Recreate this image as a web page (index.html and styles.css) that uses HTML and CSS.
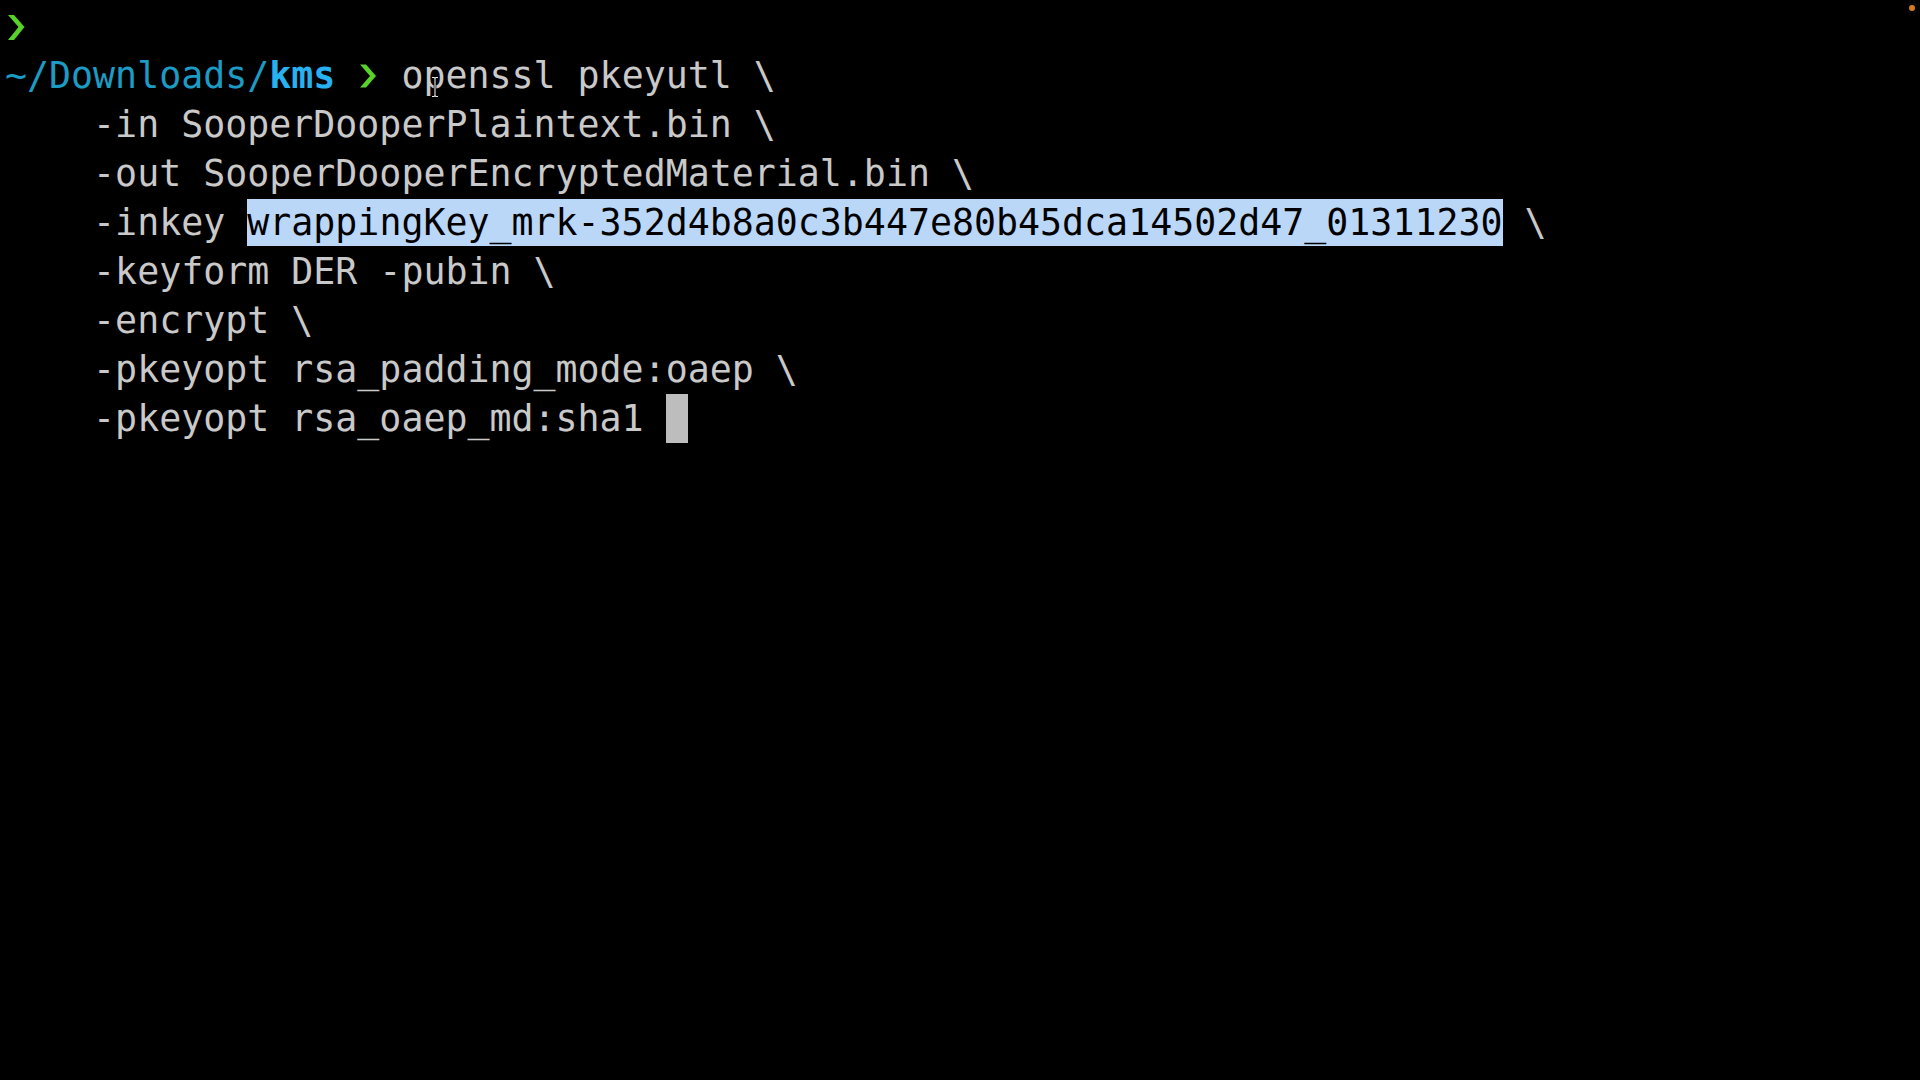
FILE: index.html
```html
<!DOCTYPE html>
<html lang="en">
<head>
<meta charset="utf-8">
<title>Terminal</title>
<link rel="stylesheet" href="styles.css">
</head>
<body>
<div class="screen">
  <div class="term">
<div class="line"><svg class="chev" viewBox="0 0 22 49"><polygon points="3,13 9,13 19.5,25 9,38 3,38 13.5,25"/></svg></div>
<div class="line"><span class="path">~/Downloads/</span><span class="dir">kms</span> <svg class="chev" viewBox="0 0 22 49"><polygon points="3,13.5 9,13.5 19,25 9,36.5 3,36.5 13,25"/></svg> openssl pkeyutl \</div>
<div class="line">    -in SooperDooperPlaintext.bin \</div>
<div class="line">    -out SooperDooperEncryptedMaterial.bin \</div>
<div class="line">    -inkey <span class="sel">wrappingKey_mrk-352d4b8a0c3b447e80b45dca14502d47_01311230</span> \</div>
<div class="line">    -keyform DER -pubin \</div>
<div class="line">    -encrypt \</div>
<div class="line">    -pkeyopt rsa_padding_mode:oaep \</div>
<div class="line">    -pkeyopt rsa_oaep_md:sha1 <span class="cursor"></span></div>
  </div>
  <svg class="ibeam" viewBox="0 0 10 22"><path d="M2 1.5h2.2l0.8 1 0.8-1H8M5 2.5v17M2 20.5h2.2l0.8-1 0.8 1H8" fill="none" stroke="#000" stroke-width="2.6"/><path d="M2 1.5h2.2l0.8 1 0.8-1H8M5 2.5v17M2 20.5h2.2l0.8-1 0.8 1H8" fill="none" stroke="#e8e8e8" stroke-width="1.1"/></svg>
  <span class="dot"></span>
</div>
</body>
</html>
```
FILE: styles.css
```css
html, body {
  margin: 0;
  padding: 0;
  background: #000;
}
.screen {
  position: relative;
  width: 1920px;
  height: 1080px;
  overflow: hidden;
  background: #000;
}
.term {
  padding: 2px 0 0 5px;
  font-family: "DejaVu Sans Mono", "Liberation Mono", monospace;
  font-size: 36.6px;
  line-height: 49px;
  color: #c9c9c9;
}
.line {
  height: 49px;
  white-space: pre;
}
.path {
  color: #1c9bc4;
}
.dir {
  color: #28b1f0;
  font-weight: bold;
}
.chev {
  display: inline-block;
  width: 1ch;
  height: 49px;
  vertical-align: top;
  fill: #56d22a;
}
.sel {
  background: #bbd7f8;
  color: #000;
  padding: 2px 0;
}
.cursor {
  display: inline-block;
  width: 1ch;
  height: 49px;
  vertical-align: top;
  background: #bdbdbd;
}
.ibeam {
  position: absolute;
  left: 430px;
  top: 76px;
  width: 10px;
  height: 22px;
}
.dot {
  position: absolute;
  right: 5px;
  top: 5px;
  width: 6px;
  height: 6px;
  border-radius: 50%;
  background: #dc7a22;
}
```
